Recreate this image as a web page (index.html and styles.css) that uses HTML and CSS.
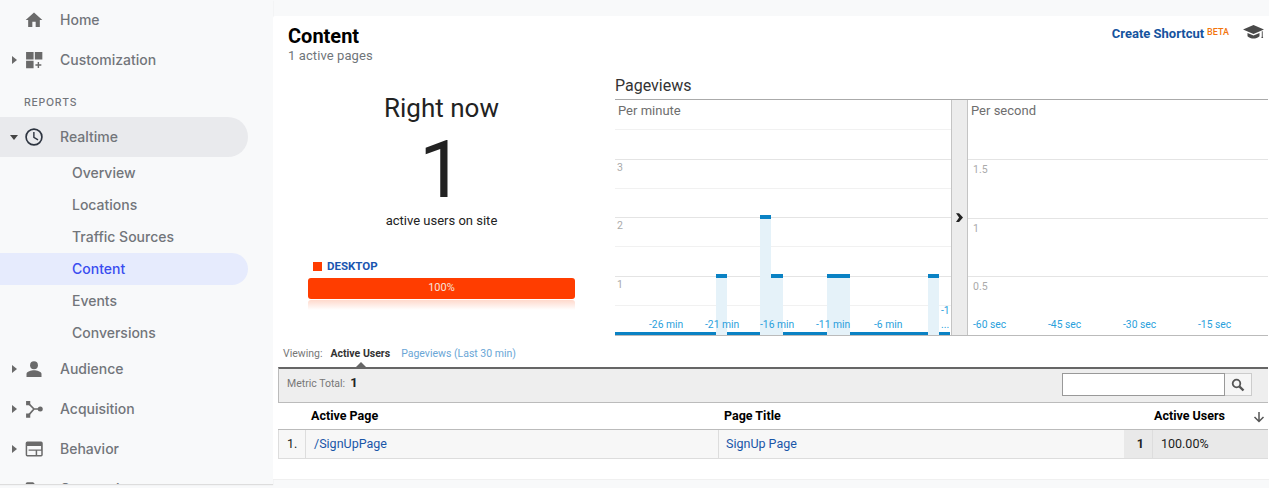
FILE: index.html
```html
<!DOCTYPE html>
<html lang="en">
<head>
<meta charset="utf-8">
<title>Content</title>
<link rel="stylesheet" href="styles.css">
</head>
<body>
<nav class="side">
  <a class="row"><span class="caret none"></span><svg class="ico" viewBox="0 0 24 24"><path d="M10 20.500v-6.500h4v6.500h5v-8.500h3L12 3 2 12h3v8.500z"/></svg><span>Home</span></a>
  <a class="row"><span class="caret"></span><svg class="ico" viewBox="0 0 24 24"><path d="M2.500 2.500h9v9h-9zM13 2.500h9v9h-9zM2.500 13h9v9h-9zM16.400 14.500h1.700v2.700h2.700v1.600h-2.700v2.700h-1.700v-2.700h-2.700v-1.600h2.700z"/></svg><span>Customization</span></a>
  <div class="label">REPORTS</div>
  <a class="row pill"><span class="caret open"></span><svg class="ico dark" viewBox="0 0 24 24"><path d="M12 1.500a10.500 10.500 0 1 0 0 21 10.500 10.500 0 0 0 0-21zm0 19a8.500 8.500 0 1 1 0-17 8.500 8.500 0 0 1 0 17zm.7-14.500H11v7l5.400 3.200.9-1.400-4.600-2.700z"/></svg><span>Realtime</span></a>
  <a class="sub">Overview</a>
  <a class="sub">Locations</a>
  <a class="sub">Traffic Sources</a>
  <a class="sub active">Content</a>
  <a class="sub">Events</a>
  <a class="sub">Conversions</a>
  <a class="row"><span class="caret"></span><svg class="ico" viewBox="0 0 24 24"><circle cx="12" cy="7.500" r="4.700"/><path d="M12 13.500c-3.200 0-9 1.500-9 4.500v3.500h18V18c0-3-5.800-4.500-9-4.500z"/></svg><span>Audience</span></a>
  <a class="row"><span class="caret"></span><svg class="ico" viewBox="0 0 24 24"><path d="M5 5l7 7h8M5 20l7-8" fill="none" stroke="#6a6a6a" stroke-width="2"/><path d="M2.500 2.500h5v5h-5zM2.500 17.500h5v5h-5z"/><circle cx="19.500" cy="12" r="3"/></svg><span>Acquisition</span></a>
  <a class="row"><span class="caret"></span><svg class="ico" viewBox="0 0 24 24"><path fill-rule="evenodd" d="M4 3h16.500a2 2 0 0 1 2 2v14a2 2 0 0 1-2 2H4a2 2 0 0 1-2-2V5a2 2 0 0 1 2-2zM3.800 8.500v10.700h10.200v-5.200H5.500v-1.500h15V8.500zm12 5.500v5.200h4.900V14z"/></svg><span>Behavior</span></a>
  <a class="row"><span class="caret"></span><svg class="ico" viewBox="0 0 24 24"><path d="M4 4h7l2 2h7a2 2 0 0 1 2 2v10a2 2 0 0 1-2 2H4a2 2 0 0 1-2-2V6a2 2 0 0 1 2-2z"/></svg><span>Conversions</span></a>
</nav>
<main class="main">
  <header class="head">
    <div>
      <h1>Content</h1>
      <p class="count">1 active pages</p>
    </div>
    <div class="short">
      <a class="short-link">Create Shortcut</a><sup class="beta">BETA</sup>
      <svg class="hat" viewBox="0 0 21 14"><path d="M10.500 0 21 4.500l-10.500 4.500L0 4.500zM4.500 8l6 2.500 6-2.500v3.200c-1.500 1.500-4 2.300-6 2.300s-4.500-.8-6-2.300zM18.800 6.200h.9v5.300l.5 1.500h-1.900l.5-1.500z"/></svg>
    </div>
  </header>
  <section class="top">
    <div class="now">
      <div class="now-t">Right now</div>
      <div class="now-n">1</div>
      <div class="now-s">active users on site</div>
      <div class="dev"><i class="sq"></i><b>DESKTOP</b></div>
      <div class="bar">100%</div>
      <div class="reflect"></div>
    </div>
    <div class="pv">
      <h2>Pageviews</h2>
      <div class="charts">
        <div class="chart per-min">
          <div class="ctitle">Per minute</div>
          <i class="g s" style="top:29px"></i><i class="g" style="top:59px"></i><i class="g s" style="top:88px"></i><i class="g" style="top:117px"></i><i class="g s" style="top:146px"></i><i class="g" style="top:176px"></i><i class="g s" style="top:205px"></i>
          <span class="y" style="top:62px">3</span><span class="y" style="top:120px">2</span><span class="y" style="top:179px">1</span>
          <i class="col" style="left:101px;width:11px;top:174px"></i>
          <i class="col" style="left:145px;width:11px;top:115px"></i>
          <i class="col" style="left:156px;width:12px;top:174px"></i>
          <i class="col" style="left:212px;width:23px;top:174px"></i>
          <i class="col" style="left:313px;width:11px;top:174px"></i>
          <i class="base" style="left:0;width:101px"></i>
          <i class="base" style="left:112px;width:33px"></i>
          <i class="base" style="left:168px;width:44px"></i>
          <i class="base" style="left:235px;width:78px"></i>
          <i class="base" style="left:324px;width:11px"></i>
          <span class="x" style="left:34px">-26 min</span>
          <span class="x" style="left:90px">-21 min</span>
          <span class="x" style="left:145px">-16 min</span>
          <span class="x" style="left:201px">-11 min</span>
          <span class="x" style="left:259px">-6 min</span>
          <span class="x" style="left:326px;top:205px">-1</span>
          <span class="x" style="left:326px">...</span>
        </div>
        <div class="split"><svg viewBox="0 0 8 10"><path d="M0 0h3.500L8 5l-4.500 5H0l3.500-5z"/></svg></div>
        <div class="chart per-sec">
          <div class="ctitle">Per second</div>
          <i class="g" style="top:59px"></i><i class="g" style="top:118px"></i><i class="g" style="top:176px"></i>
          <span class="y" style="top:64px;left:5px">1.5</span><span class="y" style="top:123px;left:5px">1</span><span class="y" style="top:181px;left:5px">0.5</span>
          <span class="x" style="left:5px">-60 sec</span>
          <span class="x" style="left:80px">-45 sec</span>
          <span class="x" style="left:155px">-30 sec</span>
          <span class="x" style="left:230px">-15 sec</span>
        </div>
      </div>
    </div>
  </section>
  <div class="view"><span>Viewing:</span><b>Active Users</b><a>Pageviews (Last 30 min)</a><i class="notch"></i></div>
  <section class="tbl">
    <div class="tool">
      <div class="metric">Metric Total:<b>1</b></div>
      <div class="search"><span class="input"></span><span class="btn"><svg viewBox="0 0 14 14"><circle cx="5.500" cy="5.500" r="3.800" fill="none" stroke="#555" stroke-width="1.800"/><path d="M8.300 8.300 12.500 12.500" stroke="#555" stroke-width="2.400" fill="none"/></svg></span></div>
    </div>
    <div class="tr th">
      <div class="c-n"></div>
      <div class="c-p">Active Page</div>
      <div class="c-t">Page Title</div>
      <div class="c-u">Active Users<svg viewBox="0 0 12 12"><path d="M6 1v9.500M1.500 6l4.500 4.500 4.500-4.500" fill="none" stroke="#555" stroke-width="1.500"/></svg></div>
    </div>
    <div class="tr td">
      <div class="c-n">1.</div>
      <div class="c-p"><a>/SignUpPage</a></div>
      <div class="c-t"><a>SignUp Page</a></div>
      <div class="c-v">1</div>
      <div class="c-pc">100.00%</div>
    </div>
  </section>
</main>
</body>
</html>
```
FILE: styles.css
```css
* { box-sizing: border-box; }
html, body { margin: 0; height: 488px; overflow: hidden; }
body { display: flex; background: #f8f9fa; font-family: Roboto, sans-serif; color: #222; }
i { display: block; font-style: normal; }
h1, h2, p { margin: 0; font-weight: normal; }

.side { width: 273px; height: 484px; flex: none; overflow: hidden; font-family: Inter, sans-serif; font-size: 14px; font-weight: 500; color: #72757a; box-shadow: 0 1px 1px #ddd; }
.row { display: flex; align-items: center; height: 40px; width: 248px; }
.row span:last-child { margin-left: 16px; padding-bottom: 2px; }
.caret { width: 0; height: 0; margin-left: 12px; margin-right: 7px; border-left: 5px solid #6a6a6a; border-top: 4px solid transparent; border-bottom: 4px solid transparent; }
.caret.none { border-color: transparent; }
.caret.open { margin-left: 10px; margin-right: 6px; border-top: 5px solid #444; border-left: 4px solid transparent; border-right: 4px solid transparent; border-bottom: 0; }
.ico { width: 20px; height: 20px; fill: #6a6a6a; flex: none; }
.ico.dark { fill: #2d3440; }
.label { height: 37px; padding: 16px 0 0 24px; font-size: 10.500px; letter-spacing: .7px; color: #72757a; }
.pill { background: #e9eaed; border-radius: 0 20px 20px 0; }
.sub { display: flex; align-items: center; width: 248px; height: 32px; padding: 0 0 2px 72px; }
.sub.active { background: #e6ebfd; color: #3a4df0; border-radius: 0 16px 16px 0; }

.main { flex: 1; height: 464px; margin-top: 16px; background: #fff; padding-left: 5px; min-width: 0; border-radius: 2px 0 0 0; border-bottom: 1px solid #f0f0f0; }
.head { display: flex; justify-content: space-between; height: 54px; padding: 9px 5px 0 10px; }
h1 { font-size: 20px; font-weight: 700; color: #000; line-height: 23px; }
.count { font-size: 13px; color: #70757a; line-height: 15px; letter-spacing: .1px; }
.short { display: flex; align-items: flex-start; padding-top: 1px; }
.short-link { font-size: 13px; font-weight: 700; color: #15539e; line-height: 16px; }
.beta { font-size: 9px; font-weight: 500; color: #f2750d; line-height: 10px; margin: 1px 0 0 3px; }
.hat { width: 21px; height: 14px; fill: #4a4a4a; margin: -1px 0 0 14px; }

.top { display: flex; height: 266px; }
.now { width: 337px; padding: 22px 40px 0 30px; text-align: center; }
.now-t { font-size: 26px; line-height: 32px; font-weight: 400; color: #222; }
.now-n { font-size: 80px; font-weight: 400; line-height: 76px; margin-top: 8px; }
.now-s { font-size: 13px; line-height: 16px; margin-top: 5px; }
.dev { display: flex; align-items: center; height: 14px; margin: 30px 0 0 5px; font-size: 11.500px; color: #1a56b0; }
.sq { width: 9px; height: 9px; background: #ff3d00; margin-right: 5px; }
.bar { width: 267px; height: 21px; margin-top: 5px; background: #ff3d00; color: #f6e3dc; border-radius: 3px; font-size: 11px; line-height: 20px; }
.reflect { width: 267px; height: 10px; margin-top: 1px; background: linear-gradient(#ffd9cc, #fff); border-radius: 3px 3px 0 0; }

.pv { width: 653px; }
h2 { font-size: 16px; line-height: 22px; color: #333; height: 24px; margin-top: 5px; }
.charts { display: flex; height: 237px; border-top: 1px solid #aaa; border-bottom: 1px solid #bbb; }
.chart { position: relative; height: 100%; overflow: hidden; }
.per-min { width: 336px; }
.per-sec { flex: 1; }
.ctitle { position: absolute; left: 3px; top: 3px; font-size: 13px; line-height: 16px; color: #6e6e6e; }
.g { position: absolute; left: 0; right: 0; height: 1px; background: #e4e4e4; }
.g.s { background: #f1f1f1; }
.y { position: absolute; left: 2px; font-size: 10.500px; line-height: 12px; color: #aaa; }
.x { position: absolute; top: 219px; font-size: 10.300px; line-height: 12px; color: #2a9fdc; }
.col { position: absolute; bottom: 0; background: #e5f2f9; border-top: 4px solid #0a82c4; }
.base { position: absolute; bottom: 0; height: 3px; background: #0a82c4; }
.split { width: 17px; flex: none; background: #ececec; border-left: 1px solid #c4c4c4; border-right: 1px solid #c4c4c4; display: flex; align-items: center; justify-content: center; }
.split svg { width: 7px; height: 9px; fill: #222; }

.view { position: relative; display: flex; align-items: center; height: 31px; padding: 7px 0 3px 5px; font-size: 10.500px; color: #777; }
.view b { color: #333; margin-left: 8px; font-weight: 700; }
.view a { color: #6aa6d6; margin-left: 11px; }
.notch { position: absolute; left: 77px; bottom: -1px; width: 0; height: 0; border-left: 6px solid transparent; border-right: 6px solid transparent; border-bottom: 6px solid #666; }

.tbl { width: 990px; }
.tool { display: flex; justify-content: space-between; height: 36px; background: #eee; border-top: 2px solid #666; border-left: 1px solid #bbb; border-bottom: 1px solid #bbb; }
.metric { font-size: 10.500px; color: #777; padding: 7px 0 0 8px; line-height: 14px; }
.metric b { font-size: 13px; color: #222; margin-left: 5px; }
.search { display: flex; height: 23px; margin: 4px 16px 0 0; }
.input { width: 163px; background: #fff; border: 1px solid #999; }
.btn { display: flex; align-items: center; justify-content: center; width: 27px; background: #f6f6f6; border: 1px solid #ccc; border-left: 0; }
.btn svg { width: 14px; height: 14px; }

.tr { display: flex; font-size: 12.500px; }
.th { height: 27px; align-items: center; font-weight: 700; color: #000; border-bottom: 1px solid #bbb; padding-bottom: 2px; }
.th .c-n { width: 27px; }
.th .c-p { width: 413px; padding-left: 6px; }
.th .c-t { width: 430px; padding-left: 6px; }
.c-u { display: flex; align-items: center; padding-left: 6px; flex: 1; }
.c-u svg { width: 12px; height: 12px; margin: 3px 0 0 28px; }
.td { height: 29px; background: #f7f7f7; border-left: 1px solid #ddd; border-bottom: 1px solid #ddd; line-height: 28px; color: #222; }
.td > div { height: 28px; }
.td a { color: #1a56a8; }
.td .c-n { width: 27px; padding-left: 8px; border-right: 1px solid #ddd; }
.td .c-p { width: 413px; padding-left: 8px; border-right: 1px solid #ddd; }
.td .c-t { width: 405px; padding-left: 7px; }
.c-v { width: 29px; background: #e9e9e9; border-right: 1px solid #ddd; text-align: right; padding-right: 8px; font-weight: 700; }
.c-pc { flex: 1; background: #e9e9e9; padding-left: 8px; }
```
